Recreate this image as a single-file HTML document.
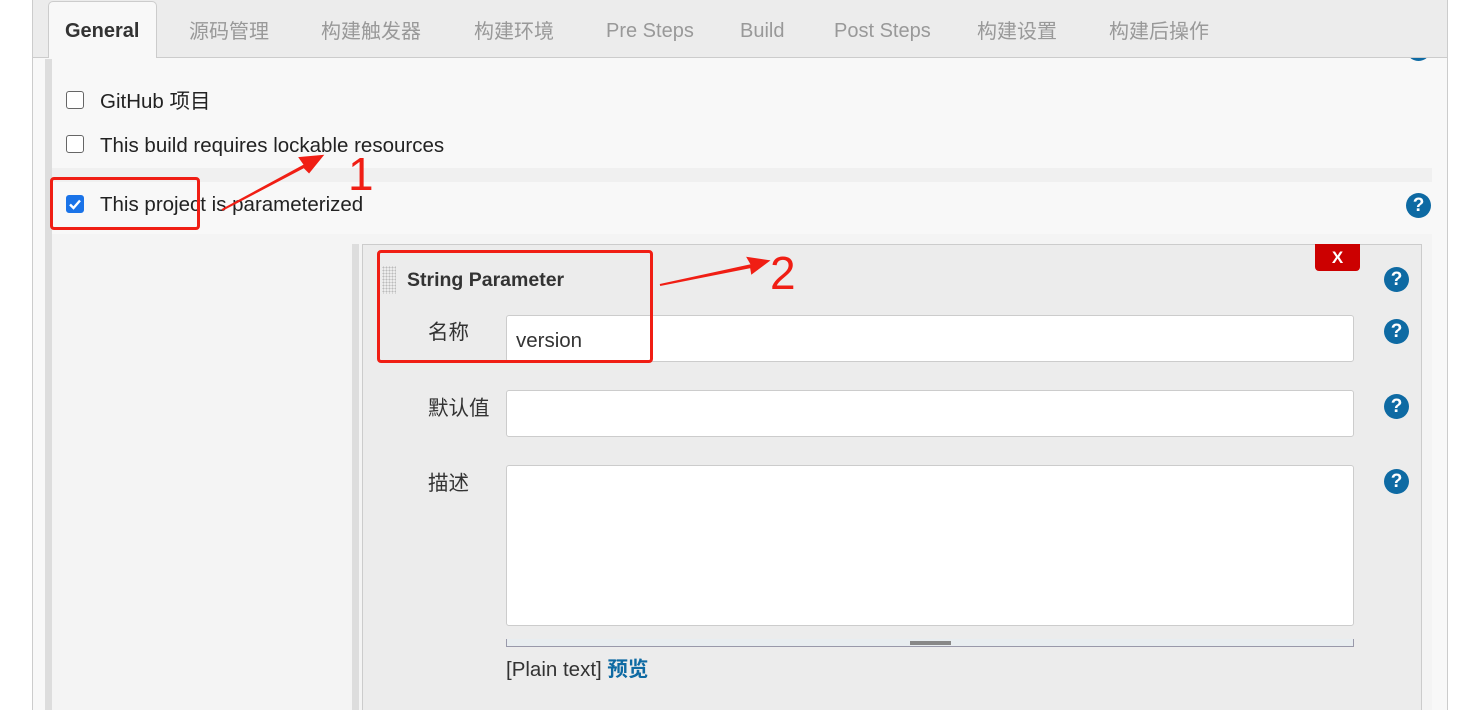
<!DOCTYPE html>
<html><head><meta charset="utf-8"><style>
*{box-sizing:border-box;margin:0;padding:0}
html,body{width:1470px;height:710px;overflow:hidden}
body{background:#fff;font-family:"Liberation Sans","Noto Sans CJK SC",sans-serif;color:#333;position:relative}
.a{position:absolute}
.tab{position:absolute;top:17px;height:28px;line-height:28px;font-size:20px;color:#999}
.q{position:absolute;width:25px;height:25px;border-radius:50%;background:#0e6aa3;color:#fff;font-weight:bold;font-size:19px;text-align:center;line-height:25px}
.cb{position:absolute;width:18px;height:18px;border:1px solid #666;border-radius:3px;background:#fff}
.lbl{position:absolute;font-size:20.5px;color:#222;line-height:26px}
.inp{position:absolute;background:#fff;border:1px solid #ccc;border-radius:3px}
.red{position:absolute;border:3px solid #f01e14;border-radius:4px}
</style></head><body>
<div class="a" style="left:32px;top:0;width:1416px;height:710px;background:#f8f8f8;border-left:1px solid #ccc;border-right:1px solid #ccc"></div>
<div class="q" style="left:1406px;top:36px"></div>
<div class="a" style="left:33px;top:0;width:1414px;height:58px;background:#ececec;border-bottom:1px solid #ccc"></div>
<div class="a" style="left:48px;top:1px;width:109px;height:57px;background:#f8f8f8;border:1px solid #ccc;border-bottom:none;border-radius:5px 5px 0 0"></div>
<div class="tab" style="left:65px;color:#333;font-weight:bold">General</div>
<div class="tab" style="left:189px;top:18px">源码管理</div>
<div class="tab" style="left:321px;top:18px">构建触发器</div>
<div class="tab" style="left:474px;top:18px">构建环境</div>
<div class="tab" style="left:606px">Pre Steps</div>
<div class="tab" style="left:740px">Build</div>
<div class="tab" style="left:834px">Post Steps</div>
<div class="tab" style="left:977px;top:18px">构建设置</div>
<div class="tab" style="left:1109px;top:18px">构建后操作</div>
<div class="a" style="left:45px;top:59px;width:7px;height:651px;background:#ddd"></div>
<div class="a" style="left:52px;top:168px;width:1380px;height:14px;background:#f0f0f0"></div>
<div class="cb" style="left:66px;top:91px"></div>
<div class="lbl" style="left:100px;top:89px">GitHub 项目</div>
<div class="cb" style="left:66px;top:135px"></div>
<div class="lbl" style="left:100px;top:133px">This build requires lockable resources</div>
<div class="cb" style="left:66px;top:195px;background:#1a73e8;border-color:#1a73e8"><svg width="16" height="16" viewBox="0 0 16 16" style="position:absolute;left:0;top:0"><path d="M3 8.5 L6.5 12 L13 4.5" stroke="#fff" stroke-width="2.4" fill="none"/></svg></div>
<div class="lbl" style="left:100px;top:192px">This project is parameterized</div>
<div class="q" style="left:1406px;top:193px">?</div>
<div class="a" style="left:52px;top:234px;width:1380px;height:476px;background:#f4f4f4"></div>
<div class="a" style="left:352px;top:244px;width:7px;height:466px;background:#ddd"></div>
<div class="a" style="left:362px;top:244px;width:1060px;height:466px;background:#ececec;border:1px solid #ccc;border-bottom:none"></div>
<div class="a" style="left:382px;top:266px;width:14px;height:28px;background-image:radial-gradient(#bbb 40%,transparent 41%);background-size:3px 3px"></div>
<div class="lbl" style="left:407px;top:267px;font-weight:bold;font-size:19.5px;color:#333">String Parameter</div>
<div class="a" style="left:1315px;top:244px;width:45px;height:27px;background:#cc0000;border-radius:0 0 4px 4px;color:#fff;font-weight:bold;text-align:center;line-height:27px;font-size:17px">X</div>
<div class="q" style="left:1384px;top:267px">?</div>
<div class="lbl" style="left:428px;top:320px;color:#333">名称</div>
<div class="inp" style="left:506px;top:315px;width:848px;height:47px"></div>
<div class="lbl" style="left:516px;top:328px;color:#333">version</div>
<div class="q" style="left:1384px;top:319px">?</div>
<div class="lbl" style="left:428px;top:396px;color:#333">默认值</div>
<div class="inp" style="left:506px;top:390px;width:848px;height:47px"></div>
<div class="q" style="left:1384px;top:394px">?</div>
<div class="lbl" style="left:428px;top:471px;color:#333">描述</div>
<div class="inp" style="left:506px;top:465px;width:848px;height:161px"></div>
<div class="a" style="left:506px;top:639px;width:848px;height:8px;background:#e8edf0;border:1px solid #99a;border-top:none"></div>
<div class="a" style="left:910px;top:641px;width:41px;height:4px;border-top:2px solid #888;border-bottom:2px solid #888"></div>
<div class="q" style="left:1384px;top:469px">?</div>
<div class="lbl" style="left:506px;top:657px;color:#333">[Plain text] <b style="color:#0e6aa3">预览</b></div>
<div class="red" style="left:50px;top:177px;width:150px;height:53px"></div>
<div class="red" style="left:377px;top:250px;width:276px;height:113px"></div>
<svg class="a" style="left:0;top:0" width="1470" height="710">
<path d="M222 210 L305 165 L300 158 L322 156 L309 172 L304 167 Z" fill="#f01e14" stroke="#f01e14" stroke-width="2"/>
<path d="M660 285 L752 265 L748 258 L768 261 L752 273 L751 267 Z" fill="#f01e14" stroke="#f01e14" stroke-width="2"/>
<text x="348" y="190" font-size="46" fill="#f01e14" font-family="Liberation Sans">1</text>
<text x="770" y="289" font-size="46" fill="#f01e14" font-family="Liberation Sans">2</text>
</svg>
</body></html>
